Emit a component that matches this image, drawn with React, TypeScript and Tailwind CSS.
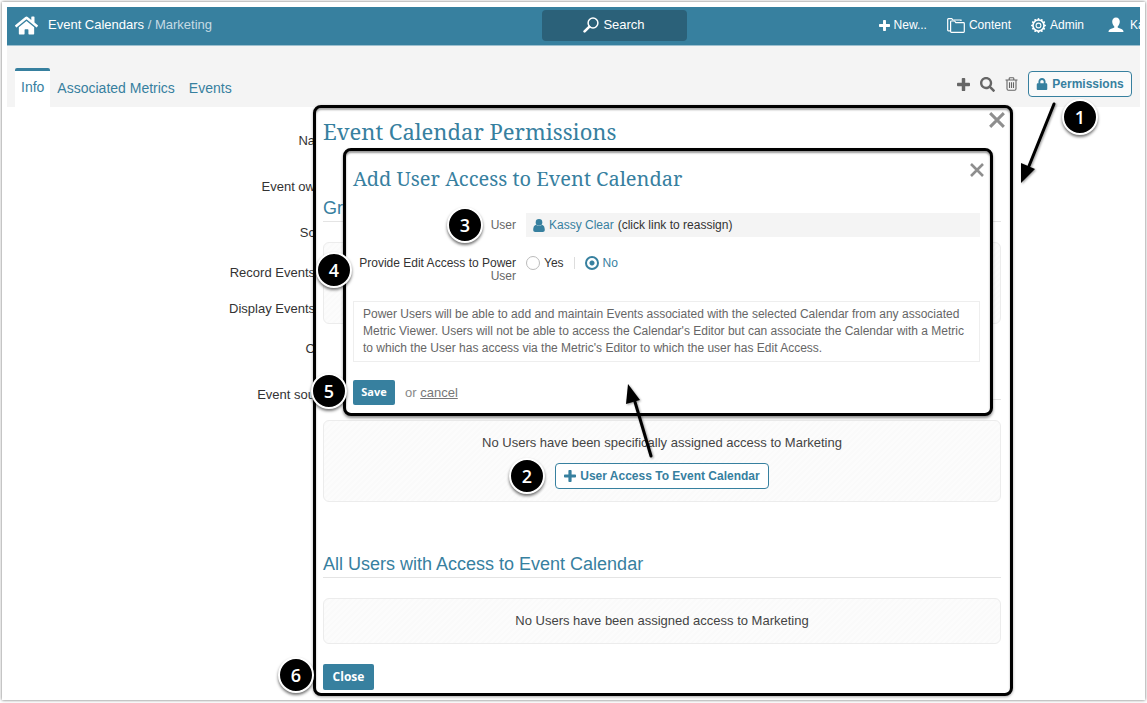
import type { ReactNode } from 'react';
import { FaHome, FaLock, FaSearch } from 'react-icons/fa';
import { BsGearWide } from 'react-icons/bs';

const fieldLabels = [
  { text: 'Na', height: 'h-[46px]' },
  { text: 'Event ow', height: 'h-[46px]' },
  { text: 'Sc', height: 'h-10' },
  { text: 'Record Events', height: 'h-9' },
  { text: 'Display Events', height: 'h-10' },
  { text: 'C', height: 'h-[46px]' },
  { text: 'Event sou', height: 'h-[46px]' },
];

const StepBadge = ({ step, className }: { step: number; className: string }) => (
  <span
    className={`absolute z-20 flex h-9 w-9 items-center justify-center rounded-full border-2 border-white bg-black font-['Open_Sans',sans-serif] text-lg font-semibold text-white shadow-[0_2px_3px_rgba(0,0,0,0.55)] ${className}`}
  >
    {step}
  </span>
);

const PlusIcon = ({ size }: { size: number }) => (
  <svg width={size} height={size} viewBox="0 0 12 12" fill="currentColor">
    <path d="M5.2 0H6.8Q7.6 0 7.6.8V4.4H11.2Q12 4.4 12 5.2V6.8Q12 7.6 11.2 7.6H7.6V11.2Q7.6 12 6.8 12H5.2Q4.4 12 4.4 11.2V7.6H.8Q0 7.6 0 6.8V5.2Q0 4.4.8 4.4H4.4V.8Q4.4 0 5.2 0Z" />
  </svg>
);

const CloseIcon = ({ size }: { size: number }) => (
  <svg width={size} height={size} viewBox="0 0 14 14" fill="none">
    <path d="M1 1L13 13M13 1L1 13" stroke="#8e8e8e" strokeWidth="2.6" />
  </svg>
);

const HeaderSearchIcon = () => (
  <svg width="16" height="16" viewBox="0 0 16 16" fill="none">
    <circle cx="10" cy="6" r="4.9" stroke="#fff" strokeWidth="1.5" />
    <path d="M6.2 9.8L1.6 14.4" stroke="#fff" strokeWidth="2.6" strokeLinecap="round" />
  </svg>
);

const FoldersIcon = () => (
  <svg width="18" height="15" viewBox="0 0 18 15" fill="none" stroke="#fff" strokeWidth="1.2">
    <path d="M3.2 12.8H1.4Q.7 12.8.7 12V1.4Q.7.7 1.4.7H4.8L5.8 2H14V3" />
    <path d="M3.6 13.6V3.8Q3.6 3 4.4 3H7.6L8.8 4.6H16.5Q17.3 4.6 17.3 5.4V13.6Q17.3 14.4 16.5 14.4H4.4Q3.6 14.4 3.6 13.6Z" />
  </svg>
);

// Cog with a scalloped rim and a hollow hub
const CogIcon = () => (
  <span className="relative flex h-[15px] w-[15px] items-center justify-center">
    <BsGearWide size={15} />
    <svg className="absolute" width="7" height="7" viewBox="0 0 7 7" fill="none">
      <circle cx="3.5" cy="3.5" r="2.4" stroke="#fff" strokeWidth="1.1" />
    </svg>
  </span>
);

const ProfileIcon = () => (
  <svg width="16" height="16" viewBox="0 0 16 16" fill="#fff">
    <path d="M8 .5C10.4.5 11.8 2.2 11.8 4.6C11.8 6.6 10.9 8.6 9.7 9.4V10.6C10.6 11.6 13.4 11.8 14.6 12.8C15.3 13.4 15.5 14.2 15.5 15H.5C.5 14.2.7 13.4 1.4 12.8C2.6 11.8 5.4 11.6 6.3 10.6V9.4C5.1 8.6 4.2 6.6 4.2 4.6C4.2 2.2 5.6.5 8 .5Z" />
  </svg>
);

const UserIcon = () => (
  <svg width="12" height="13" viewBox="0 0 12 13" fill="#37809f">
    <circle cx="6" cy="3.4" r="3.3" />
    <path d="M3 5.8C4.8 7.5 7.2 7.5 9 5.8C11 6.2 11.8 8.6 11.8 11C11.8 12.2 11 12.9 9.8 12.9H2.2C1 12.9.2 12.2.2 11C.2 8.6 1 6.2 3 5.8Z" />
  </svg>
);

const TrashIcon = () => (
  <svg width="13" height="14" viewBox="0 0 13 14" fill="none" stroke="#666" strokeWidth="1.1">
    <path d="M.5 3H12.5M4.2 3V1.4Q4.2.7 5 .7H8Q8.8.7 8.8 1.4V3" />
    <path d="M2 3V11.8Q2 13.3 3.4 13.3H9.6Q11 13.3 11 11.8V3" />
    <path d="M4.5 5.2V11M6.5 5.2V11M8.5 5.2V11" />
  </svg>
);

const EmptyPanel = ({ children, className }: { children?: ReactNode; className: string }) => (
  <div
    className={`flex flex-col items-center justify-center gap-2.5 rounded-md border border-[#ececec] bg-[repeating-linear-gradient(135deg,#fcfcfc_0_2px,#fafafa_2px_4px)] text-[#444] ${className}`}
  >
    {children}
  </div>
);

const TopBar = () => (
  <header className="relative flex h-[39px] items-center overflow-hidden border-b border-[#9dc0cf] bg-[#37809f] pb-0.5 text-[13px] text-white">
    <a href="#home" aria-label="Home" className="ml-2">
      <FaHome size={23} />
    </a>
    <nav className="ml-2.5 whitespace-nowrap">
      <a href="#calendars">Event Calendars</a>
      <span className="text-[#c5dbe4]"> / Marketing</span>
    </nav>
    <button className="absolute left-1/2 ml-[-32px] flex h-[31px] w-[145px] items-center justify-center gap-1 rounded-sm bg-[#2b6179]">
      <HeaderSearchIcon />
      Search
    </button>
    <nav className="ml-auto flex items-center text-xs whitespace-nowrap">
      <a href="#new" className="mr-5 flex items-center gap-1">
        <PlusIcon size={11} />
        New...
      </a>
      <a href="#content" className="mr-5 flex items-center gap-1">
        <FoldersIcon />
        Content
      </a>
      <a href="#admin" className="mr-6 flex items-center gap-1">
        <CogIcon />
        Admin
      </a>
      <a href="#profile" className="flex w-8 items-center gap-1.5">
        <span className="shrink-0">
          <ProfileIcon />
        </span>
        Ka
      </a>
    </nav>
  </header>
);

const TabBar = () => (
  <div className="flex h-[61px] items-end bg-[#f4f4f4] pr-2 pl-2">
    <nav className="flex text-sm text-[#37809f]">
      <a href="#info" className="h-[39px] rounded-t-xs border-t-3 border-[#37809f] bg-white px-1.5 pt-1.5">
        Info
      </a>
      <a href="#metrics" className="px-[7px] pt-2.5">
        Associated Metrics
      </a>
      <a href="#events" className="px-[7px] pt-2.5">
        Events
      </a>
    </nav>
    <div className="mb-2.5 ml-auto flex items-center gap-2.5 text-[#666]">
      <button aria-label="Add">
        <PlusIcon size={13} />
      </button>
      <button aria-label="Find">
        <FaSearch size={15} />
      </button>
      <button aria-label="Delete">
        <TrashIcon />
      </button>
      <button className="flex h-[26px] w-[104px] items-center justify-center gap-1 rounded-sm border border-[#37809f] bg-[#fafafa] text-xs font-bold text-[#37809f]">
        <FaLock size={12} />
        Permissions
      </button>
    </div>
  </div>
);

const AddUserDialog = () => (
  <section
    role="dialog"
    aria-labelledby="add-user-title"
    className="absolute top-10 right-[17px] left-[27px] z-10 rounded-lg border-3 border-black bg-white pr-1.5 pb-2 pl-[7px] shadow-[0_2px_3px_rgba(0,0,0,0.45),inset_0_2px_2px_rgba(0,0,0,0.4)]"
  >
    <div className="flex items-start justify-between">
      <h2
        id="add-user-title"
        className="pt-3.5 font-['Noto_Serif','Droid_Serif','Liberation_Serif',serif] text-xl leading-7 text-[#37809f]"
      >
        Add User Access to Event Calendar
      </h2>
      <button aria-label="Close" className="mt-3">
        <CloseIcon size={14} />
      </button>
    </div>

    <form className="mr-1 text-xs text-[#333]">
      <div className="mt-5 flex items-center">
        <span className="w-[163px] text-right text-[#666]">User</span>
        <div className="ml-2.5 flex h-6 flex-1 items-center gap-1 bg-[#f4f4f4] px-[7px]">
          <UserIcon />
          <a href="#user" className="text-[#37809f]">
            Kassy Clear
          </a>
          <span>(click link to reassign)</span>
        </div>
      </div>

      <fieldset className="mt-[18px] flex items-start">
        <legend className="float-left w-[163px] pt-0.5 text-right leading-[13px]">
          Provide Edit Access to Power <span className="text-[#666]">User</span>
        </legend>
        <div className="ml-2.5 flex h-4 items-center">
          <label className="flex items-center gap-1">
            <input
              type="radio"
              name="edit-access"
              className="h-3.5 w-3.5 appearance-none rounded-full border border-[#bbb] bg-white"
            />
            Yes
          </label>
          <span className="mx-2.5 h-3 w-px bg-[#ddd]" />
          <label className="flex items-center gap-1 text-[#37809f]">
            <input
              type="radio"
              name="edit-access"
              defaultChecked
              className="h-3.5 w-3.5 appearance-none rounded-full border-2 border-[#37809f] bg-[radial-gradient(circle,#37809f_0_2px,#fff_3px)]"
            />
            No
          </label>
        </div>
      </fieldset>

      <p className="mt-[18px] border border-[#eee] px-[9px] py-1 leading-[17px] text-[#666]">
        Power Users will be able to add and maintain Events associated with the selected Calendar from any associated
        Metric Viewer. Users will not be able to access the Calendar's Editor but can associate the Calendar with a
        Metric to which the User has access via the Metric's Editor to which the user has Edit Access.
      </p>

      <div className="mt-[18px] flex items-center text-[13px] text-[#888]">
        <button
          type="button"
          className="mr-2.5 h-[25px] w-[42px] rounded-xs bg-[#37809f] font-['Open_Sans',sans-serif] text-[11px] font-bold text-white"
        >
          Save
        </button>
        <span>
          or{' '}
          <a href="#cancel" className="text-[#777] underline">
            cancel
          </a>
        </span>
      </div>
    </form>

    <StepBadge step={3} className="top-14 left-[101px]" />
    <StepBadge step={4} className="top-[101px] -left-[30px]" />
    <StepBadge step={5} className="bottom-1 -left-[35px]" />
  </section>
);

const PermissionsDialog = () => (
  <section
    role="dialog"
    aria-labelledby="permissions-title"
    className="absolute top-[98px] right-[127px] left-[306px] rounded-lg border-3 border-black bg-white pr-[9px] pb-[3px] pl-[7px] text-[13px] shadow-[0_1px_3px_rgba(0,0,0,0.35),inset_0_2px_2px_rgba(0,0,0,0.35)]"
  >
    <div className="flex items-start justify-between">
      <h1
        id="permissions-title"
        className="pt-2 font-['Noto_Serif','Droid_Serif','Liberation_Serif',serif] text-[22px] leading-[30px] text-[#37809f]"
      >
        Event Calendar Permissions
      </h1>
      <button aria-label="Close" className="-mr-1 pt-1">
        <CloseIcon size={16} />
      </button>
    </div>

    <h2 className="mt-[50px] h-[26px] border-b border-[#e4e4e4] text-lg leading-6 text-[#37809f]">Gr</h2>
    <EmptyPanel className="mt-5 h-[82px]" />

    <div className="mt-[50px] h-[26px] border-b border-[#e4e4e4]" />
    <EmptyPanel className="mt-5 h-[82px]">
      <p>No Users have been specifically assigned access to Marketing</p>
      <button className="flex h-[26px] w-[214px] items-center justify-center gap-1 rounded-sm border border-[#37809f] bg-white text-xs font-bold text-[#37809f]">
        <PlusIcon size={12} />
        User Access To Event Calendar
      </button>
    </EmptyPanel>

    <h2 className="mt-[50px] h-[26px] border-b border-[#e4e4e4] text-lg leading-6 text-[#37809f]">
      All Users with Access to Event Calendar
    </h2>
    <EmptyPanel className="mt-5 h-[46px]">
      <p>No Users have been assigned access to Marketing</p>
    </EmptyPanel>

    <button className="mt-5 h-[26px] w-[51px] rounded-xs bg-[#37809f] font-['Open_Sans',sans-serif] text-xs font-bold text-white">
      Close
    </button>

    <AddUserDialog />
    <StepBadge step={2} className="top-[350px] left-[193px]" />
    <StepBadge step={6} className="bottom-0 -left-[38px]" />

    {/* Arrow from the access button up to the inner dialog */}
    <svg
      className="absolute top-[274px] left-[306px] z-20 drop-shadow-[1px_1px_1px_rgba(0,0,0,0.4)]"
      width="34"
      height="78"
      viewBox="0 0 34 78"
    >
      <path d="M29 74L13 20" stroke="#000" strokeWidth="3" strokeLinecap="round" />
      <path d="M6 2L4 22L18 18Z" />
    </svg>
  </section>
);

export default function App() {
  return (
    <div className="flex min-h-screen flex-col bg-white px-0.5 pt-0.5 pb-[3px] font-['Liberation_Sans',Arial,sans-serif]">
      <div className="relative flex flex-1 flex-col p-[5px] shadow-[0_0_3px_rgba(0,0,0,0.6)]">
        <div className="relative">
          <TopBar />
          <TabBar />
          <ul className="w-[308px] pt-6 text-[13px] leading-5 text-[#333]">
            {fieldLabels.map(({ text, height }) => (
              <li key={text} className={`text-right ${height}`}>
                {text}
              </li>
            ))}
          </ul>

          <PermissionsDialog />
          <StepBadge step={1} className="top-[92px] right-[42px]" />

          {/* Arrow from the Permissions button to the outer dialog */}
          <svg
            className="absolute top-[93px] right-[80px] z-20 drop-shadow-[1px_1px_1px_rgba(0,0,0,0.4)]"
            width="44"
            height="86"
            viewBox="0 0 44 86"
          >
            <path d="M38 4L13 66" stroke="#000" strokeWidth="3" strokeLinecap="round" />
            <path d="M5 83L5 63L19 69Z" />
          </svg>
        </div>
      </div>
    </div>
  );
}
